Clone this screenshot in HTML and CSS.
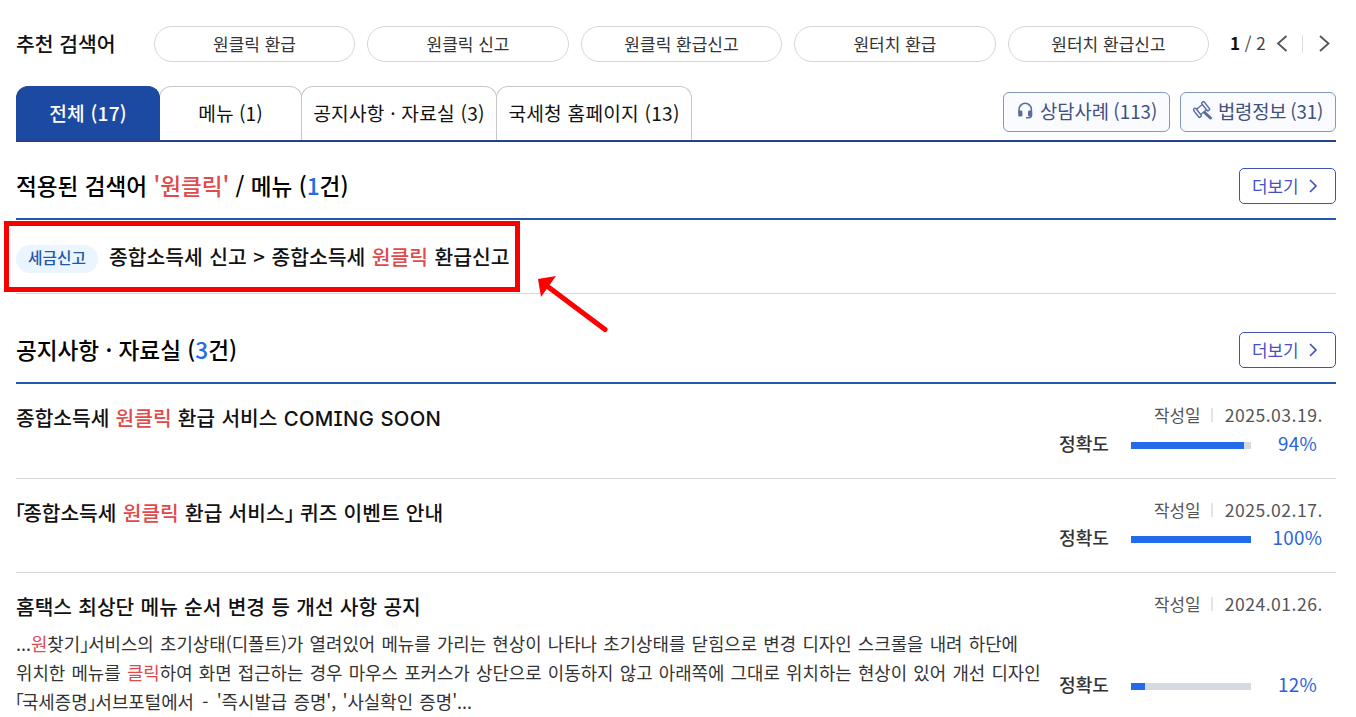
FILE: index.html
```
<!DOCTYPE html>
<html lang="ko">
<head>
  <meta charset="UTF-8">
  <title>통합검색</title>
  <link rel="stylesheet" href="styles.css">
</head>
<body>
  <div class="container">

    <div class="suggest">
      <strong>추천 검색어</strong>
      <ul class="suggest-list">
        <li>원클릭 환급</li>
        <li>원클릭 신고</li>
        <li>원클릭 환급신고</li>
        <li>원터치 환급</li>
        <li>원터치 환급신고</li>
      </ul>
      <div class="pager">
        <span class="page"><b>1</b> / 2</span>
        <svg width="12" height="18" viewBox="0 0 12 18"><path d="M10.5 1 2 8.500l8.500 7.500"/></svg>
        <i></i>
        <svg width="12" height="18" viewBox="0 0 12 18"><path d="M1 1l8.500 7.500-8.500 7.500"/></svg>
      </div>
    </div>

    <div class="tabs">
      <a class="tab tab-all active">전체 (17)</a>
      <a class="tab tab-menu">메뉴 (1)</a>
      <a class="tab tab-notice">공지사항 · 자료실 (3)</a>
      <a class="tab tab-home">국세청 홈페이지 (13)</a>
      <div class="links">
        <a class="link link-case">
          <svg width="18" height="20" viewBox="0 0 18 20">
            <path d="M3 12V8.500a6.200 6.200 0 0 1 12.400 0V14q0 2.800-2.600 2.800H10" fill="none" stroke="#5a6c9e" stroke-width="1.500"/>
            <rect x="2.200" y="9.500" width="4.200" height="6" rx="1.300"/>
            <rect x="12" y="9.500" width="4.200" height="6" rx="1.300"/>
          </svg>
          <span>상담사례 (113)</span>
        </a>
        <a class="link link-law">
          <svg width="20" height="20" viewBox="0 0 20 20">
            <path d="m11 11 6.500 6" stroke="#5a6c9e" stroke-width="3" stroke-linecap="round"/>
            <g transform="translate(8.500 8.500) rotate(-38)" fill="#f9fbff" stroke="#5a6c9e" stroke-width="1.400">
              <rect x="-4" y="-3.400" width="8" height="6.800"/>
              <rect x="-6.800" y="-5.200" width="3" height="10.400" rx="1"/>
              <rect x="3.800" y="-5.200" width="3" height="10.400" rx="1"/>
            </g>
          </svg>
          <span>법령정보 (31)</span>
        </a>
      </div>
    </div>

    <div class="section-head">
      <h2 class="applied">적용된 검색어 <em>'원클릭'</em> / 메뉴 (<span>1</span>건)</h2>
      <a class="more">더보기 <svg width="9" height="14" viewBox="0 0 9 14"><path d="m1 1 6 6-6 6"/></svg></a>
    </div>
    <div class="menu-row">
      <span class="badge">세금신고</span>
      <span class="menu-path">종합소득세 신고 &gt; 종합소득세 <em>원클릭</em> 환급신고</span>
      <div class="mark"></div>
      <svg class="arrow" width="72" height="60" viewBox="0 0 72 60">
        <path d="M11 10 69 53.500" stroke="#f00" stroke-width="5.200" stroke-linecap="round"/>
        <path d="M2 3 20 0 5 21z" fill="#f00"/>
      </svg>
    </div>

    <div class="section-head second">
      <h2 class="notice-title">공지사항 · 자료실 (<span>3</span>건)</h2>
      <a class="more">더보기 <svg width="9" height="14" viewBox="0 0 9 14"><path d="m1 1 6 6-6 6"/></svg></a>
    </div>

    <div class="item">
      <div class="text">
        <h3>종합소득세 <em>원클릭</em> 환급 서비스 <span class="latin">COMING SOON</span></h3>
      </div>
      <div class="info">
        <div class="date"><span>작성일</span><i></i><b>2025.03.19.</b></div>
        <div class="rate"><span>정확도</span><div class="bar"><div style="width:94%"></div></div><b>94%</b></div>
      </div>
    </div>

    <div class="item item-2">
      <div class="text">
        <h3><span class="open">「</span>종합소득세 <em>원클릭</em> 환급 서비스<span class="close">」</span> 퀴즈 이벤트 안내</h3>
      </div>
      <div class="info">
        <div class="date"><span>작성일</span><i></i><b>2025.02.17.</b></div>
        <div class="rate"><span>정확도</span><div class="bar"><div style="width:100%"></div></div><b>100%</b></div>
      </div>
    </div>

    <div class="item item-3">
      <div class="text">
        <h3>홈택스 최상단 메뉴 순서 변경 등 개선 사항 공지</h3>
        <p>...<em>원</em>찾기<span class="close">」</span>서비스의 초기상태(디폴트)가 열려있어 메뉴를 가리는 현상이 나타나 초기상태를 닫힘으로 변경 디자인 스크롤을 내려 하단에<br>
        위치한 메뉴를 <em>클릭</em>하여 화면 접근하는 경우 마우스 포커스가 상단으로 이동하지 않고 아래쪽에 그대로 위치하는 현상이 있어 개선 디자인<br>
        <span class="open">「</span>국세증명<span class="close">」</span>서브포털에서 <span class="dash">-</span> '즉시발급 증명', '사실확인 증명'...</p>
      </div>
      <div class="info">
        <div class="date"><span>작성일</span><i></i><b>2024.01.26.</b></div>
        <div class="rate"><span>정확도</span><div class="bar"><div style="width:12%"></div></div><b>12%</b></div>
      </div>
    </div>

  </div>
</body>
</html>
```
FILE: styles.css
```
* { box-sizing: border-box; }
html { overflow: hidden; }
body { margin: 0; height: 717px; overflow: hidden; background: #fff; color: #111; font-family: "Noto Sans CJK KR", sans-serif; }
h2, h3, p, ul { margin: 0; padding: 0; }
em, i { font-style: normal; }
em { color: #e04a4a; }
svg { flex: none; }
.container { width: 1320px; margin: 0 16px; padding-top: 26px; white-space: nowrap; }

.suggest { display: flex; align-items: center; height: 36px; }
.suggest strong { width: 138px; font-size: 20.4px; font-weight: 500; line-height: 34px; padding-bottom: 2px; }
.suggest-list { display: grid; grid-template-columns: repeat(5, 1fr); gap: 12.4px; width: 1055px; list-style: none; }
.suggest-list li { height: 36px; line-height: 34px; border: 1px solid #d4d6d9; border-radius: 18px; text-align: center; font-size: 17px; color: #333; }
.pager { display: flex; align-items: center; margin-left: 21px; }
.pager svg { fill: none; stroke: #555; stroke-width: 1.8; }
.pager i { width: 1px; height: 18px; margin: 0 16px 0 14px; background: #ddd; }
.page { width: 46px; padding-bottom: 3px; font-size: 17px; color: #444; }
.page b { color: #111; }

.tabs { display: flex; height: 56px; margin-top: 24px; border-bottom: 2px solid #22428c; }
.tab { height: 54px; line-height: 52px; text-align: center; font-size: 19.2px; border: 1px solid #c4c6c9; border-bottom: 0; border-radius: 12px 12px 0 0; }
.tab + .tab { margin-left: -1px; }
.tab-all { width: 144px; }
.tab-menu { width: 143px; }
.tab-notice { width: 196px; letter-spacing: 0.2px; }
.tab-home { width: 196px; letter-spacing: 0.2px; }
.tab.active { position: relative; background: #1c4aa2; border-color: #1c4aa2; color: #fff; font-weight: 500; letter-spacing: 0.2px; }
.links { display: flex; gap: 10px; margin: 6px 0 0 auto; }
.link { display: flex; align-items: center; height: 40px; padding-left: 12px; border: 1px solid #7f9bc0; border-radius: 6px; background: #f9fbff; color: #42507c; font-size: 18.8px; word-spacing: -1px; }
.link span { padding-bottom: 4px; }
.link svg { margin: 0 6px 3px 0; fill: #5a6c9e; }
.link-case { width: 167px; }
.link-law { width: 156px; letter-spacing: -0.2px; }
.link-law svg { margin-right: 5px; }

.section-head { display: flex; justify-content: space-between; align-items: center; height: 78px; padding-top: 12px; border-bottom: 2px solid #2456ab; }
.section-head.second { margin-top: 38px; height: 52px; padding: 0 0 14px; }
h2 { padding-bottom: 2px; font-size: 22.6px; font-weight: 500; color: #000; }
h2 span { color: #246beb; }
.more { display: flex; align-items: center; width: 97px; height: 36px; padding: 0 0 2px 12px; border: 1px solid #4351b5; border-radius: 5px; color: #4351c5; font-size: 16.9px; }
.more svg { margin: 2px 0 0 10px; fill: none; stroke: #4351c5; stroke-width: 1.7; }

.menu-row { position: relative; display: flex; align-items: center; height: 74px; border-bottom: 1px solid #d6d8da; }
.badge { width: 82px; height: 28px; margin: 4px 11px 0 0; line-height: 26px; border-radius: 14px; background: #eaf5ff; color: #2456ab; text-align: center; font-size: 15.8px; font-weight: 500; }
.menu-path { padding-bottom: 2px; font-size: 20.4px; font-weight: 500; word-spacing: 0.8px; }
.mark { position: absolute; left: -12px; top: 1px; width: 516px; height: 71px; border: 5px solid #f60000; }
.arrow { position: absolute; left: 520px; top: 56px; fill: none; }

.item { display: flex; justify-content: space-between; height: 95px; border-bottom: 1px solid #d6d8da; }
.item-2, .item-3 { height: 94px; }
.item-3 { height: 144px; border: 0; }
h3 { height: 30px; margin-top: 19px; line-height: 29px; font-size: 20.3px; font-weight: 500; word-spacing: 0.6px; }
.latin { font-family: Inter, sans-serif; font-feature-settings: "cv08"; letter-spacing: 0.3px; }
/* corner brackets take a narrow advance */
.open, .close { font-feature-settings: "halt"; letter-spacing: -2px; }
.close { letter-spacing: -1px; }
.open { margin-left: -1px; }
.text p { margin-top: 7px; line-height: 29px; font-size: 17.85px; color: #333; word-spacing: 1.2px; }
.dash { padding: 0 2px; }
.info { flex: none; width: 277px; padding-top: 17px; }
.info b { font-weight: 400; }
.date { display: flex; align-items: center; height: 27px; padding-left: 95px; font-size: 16.9px; color: #555; }
.date i { width: 2px; height: 14px; margin: 0 12px 0 10px; background: #e4e4e4; }
.date b { font-size: 17.6px; letter-spacing: 0.5px; }
.rate { display: flex; align-items: center; height: 30px; font-size: 18.1px; color: #333; }
.rate span { flex: none; width: 72px; font-weight: 500; }
.rate b { flex: none; width: 93px; padding-bottom: 2px; text-align: center; font-size: 18.8px; letter-spacing: 0.3px; color: #2b63d8; }
.bar { flex: none; width: 120px; height: 7px; margin-top: 4px; background: #d6dbe1; }
.bar div { height: 7px; background: #246beb; }
.item-2 .rate { margin-top: -1px; }
.item-3 .rate { margin-top: 52px; }
```
